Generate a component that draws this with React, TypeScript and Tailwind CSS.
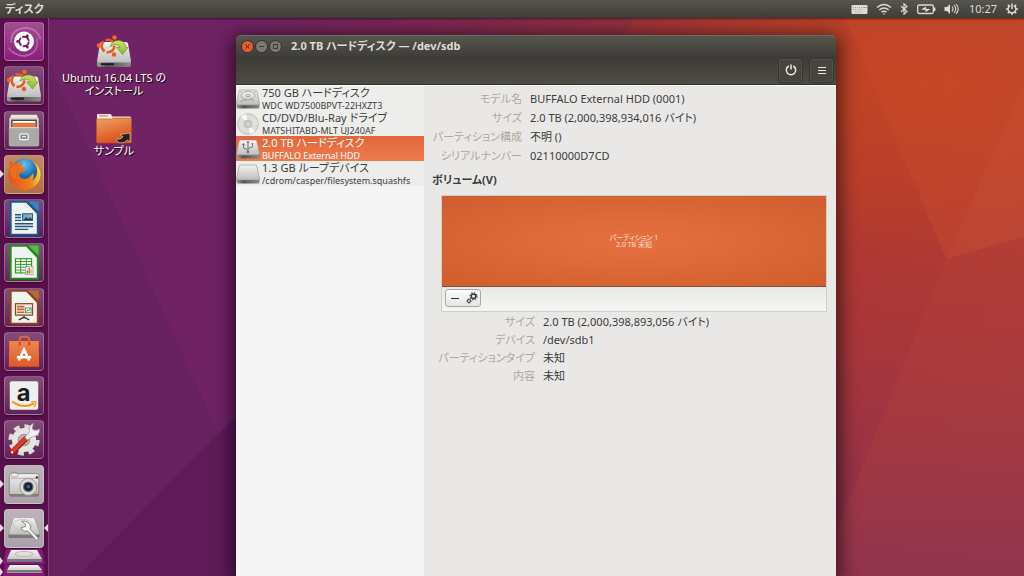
import React, { useState } from "react";

const panelFont =
  "font-['Noto_Sans','Noto_Sans_CJK_JP',sans-serif] [font-feature-settings:'palt']";

const Wallpaper = () => (
  <svg
    className="absolute inset-0 h-full w-full"
    viewBox="0 0 1024 576"
    preserveAspectRatio="none"
    aria-hidden="true"
  >
    <defs>
      <linearGradient id="wallBase" x1="0" y1="0" x2="1" y2="0">
        <stop offset="0" stopColor="#6f2366" />
        <stop offset="0.22" stopColor="#6f2264" />
        <stop offset="0.45" stopColor="#7d284f" />
        <stop offset="0.66" stopColor="#98313b" />
        <stop offset="0.84" stopColor="#b3392e" />
        <stop offset="1" stopColor="#b43c30" />
      </linearGradient>
      <linearGradient id="wallFade" x1="0" y1="0" x2="0" y2="1">
        <stop offset="0.3" stopColor="#a0334a" stopOpacity="0" />
        <stop offset="1" stopColor="#7a2c5c" stopOpacity="0.8" />
      </linearGradient>
      <radialGradient id="wallGlow" cx="0.9" cy="0.15" r="0.3">
        <stop offset="0" stopColor="#c94a20" stopOpacity="0.7" />
        <stop offset="1" stopColor="#c94a20" stopOpacity="0" />
      </radialGradient>
    </defs>
    <rect width="1024" height="576" fill="url(#wallBase)" />
    <path d="M49 62 L219 434 L78 576 H0 V0 H20 Z" fill="#67215f" />
    <path d="M236 416 L78 576 H500 V416 Z" fill="#5f1a58" />
    <path d="M633 18 L560 200 H845 V18 Z" fill="#b23c30" opacity="0.25" />
    <rect x="600" width="424" height="576" fill="url(#wallFade)" />
    <path d="M845 18 L946 259 L1024 83 V18 Z" fill="#c74c32" opacity="0.4" />
    <rect width="1024" height="576" fill="url(#wallGlow)" />
    <path d="M1024 83 L946 259 L1024 237 Z" fill="#d2583a" opacity="0.35" />
    <path d="M946 259 L1024 237 V576 H818 Z" fill="#c04a3e" opacity="0.2" />
  </svg>
);

/* Shared gradients for all the drive and device icons */
const IconDefs = () => (
  <svg className="absolute h-0 w-0" aria-hidden="true">
    <defs>
      <linearGradient id="metal" x1="0" y1="0" x2="0" y2="1">
        <stop offset="0" stopColor="#f3f3f2" />
        <stop offset="1" stopColor="#bdbdba" />
      </linearGradient>
      <linearGradient id="metalEdge" x1="0" y1="0" x2="1" y2="0">
        <stop offset="0" stopColor="#9c9c9a" />
        <stop offset="0.3" stopColor="#555" />
        <stop offset="1" stopColor="#8a8a88" />
      </linearGradient>
      <linearGradient id="folder" x1="0" y1="0" x2="0.4" y2="1">
        <stop offset="0" stopColor="#f2a35e" />
        <stop offset="1" stopColor="#d9511f" />
      </linearGradient>
      <linearGradient id="bag" x1="0" y1="0" x2="0" y2="1">
        <stop offset="0" stopColor="#f08552" />
        <stop offset="1" stopColor="#df5a22" />
      </linearGradient>
      <radialGradient id="globe" cx="0.5" cy="0.2" r="0.8">
        <stop offset="0" stopColor="#6fc4ee" />
        <stop offset="0.5" stopColor="#1f6fb8" />
        <stop offset="1" stopColor="#123a7c" />
      </radialGradient>
      <linearGradient id="fox" x1="0" y1="0.5" x2="1" y2="0.3">
        <stop offset="0" stopColor="#e5541a" />
        <stop offset="0.6" stopColor="#f07f1b" />
        <stop offset="1" stopColor="#ffdf3a" />
      </linearGradient>
      <linearGradient id="arrow" x1="0" y1="0" x2="0" y2="1">
        <stop offset="0" stopColor="#cfe06a" />
        <stop offset="1" stopColor="#86b52c" />
      </linearGradient>
    </defs>
  </svg>
);

interface DriveProps {
  className?: string;
  kind?: "plain" | "hdd" | "usb";
}

const DriveIcon: React.FC<DriveProps> = ({ className, kind = "plain" }) => (
  <svg className={className} viewBox="0 0 24 20" aria-hidden="true">
    <path d="M0.500 15 h23 v3 q0 1.500 -1.500 1.500 h-20 q-1.500 0 -1.500 -1.500z" fill="url(#metalEdge)" />
    <path d="M4.500 1 h15 q1 0 1.300 1 l2.700 12.500 q0 1.500 -1.400 1.500 h-20.200 q-1.400 0 -1.400 -1.500 l2.700 -12.500 q.3 -1 1.300 -1z" fill="url(#metal)" stroke="#8d8d8b" strokeWidth="0.6" />
    {kind === "hdd" && (
      <g fill="none" stroke="#9a9a98" strokeWidth="0.8">
        <ellipse cx="12" cy="6.5" rx="7" ry="4.3" />
        <ellipse cx="12" cy="6.5" rx="2.2" ry="1.2" />
        <path d="M4 13 q3 -3 7 -1.5 M18 12.5 l-4 -3" />
        <circle cx="5" cy="3" r="0.4" />
        <circle cx="19" cy="3" r="0.4" />
      </g>
    )}
    {kind === "usb" && (
      <g fill="none" stroke="#777" strokeWidth="1">
        <path d="M12 2.5 V13 M12 11 L7.5 9 V6 M12 9.5 L16.5 8 V5" />
        <circle cx="12" cy="13" r="1" fill="#777" />
        <circle cx="7.5" cy="5.5" r="0.8" fill="#777" />
        <path d="M15.8 4.5 h1.4 M10.8 4 l1.2 -1.7 1.2 1.7" />
      </g>
    )}
  </svg>
);

const DiscIcon = () => (
  <svg className="h-[22px] w-6 shrink-0" viewBox="0 0 24 22" aria-hidden="true">
    <circle cx="12" cy="11" r="10.3" fill="#dededc" stroke="#a9a9a7" strokeWidth="0.7" />
    <path d="M12 11 L5 3.5 A10 10 0 0 1 10 1.2 Z" fill="#f8f8f8" />
    <path d="M12 11 L19 18.5 A10 10 0 0 1 14 20.8 Z" fill="#f8f8f8" />
    <path d="M12 11 L21 7 A10 10 0 0 1 22 12 Z" fill="#e9e4c6" />
    <circle cx="12" cy="11" r="4" fill="#cfcfcd" stroke="#aaa" strokeWidth="0.6" />
    <circle cx="12" cy="11" r="1.6" fill="#f6f6f6" stroke="#999" strokeWidth="0.6" />
  </svg>
);

const InstallIcon = ({ className }: { className: string }) => (
  <svg className={className} viewBox="0 0 36 34" aria-hidden="true">
    <path d="M1 27 h34 v4 q0 2 -2 2 h-30 q-2 0 -2 -2z" fill="url(#metalEdge)" />
    <rect x="5" y="29.2" width="13" height="2" fill="#1f1f1f" />
    <path d="M6 8 h24 q1.5 0 2 1.5 l3 17.5 q0 1.5 -1.5 1.5 h-31 q-1.5 0 -1.5 -1.5 l3 -17.5 q.5 -1.5 2 -1.5z" fill="url(#metal)" />
    <ellipse cx="18" cy="19" rx="12" ry="7" fill="none" stroke="#cfcfcd" />
    <g transform="translate(12 12)">
      <circle r="6.3" fill="none" stroke="#ec5a1c" strokeWidth="2.6" strokeDasharray="11.2 2" />
      <circle cx="-9" cy="-0.500" r="2.200" fill="#f26a22" />
      <circle cx="6.500" cy="-8.500" r="2.200" fill="#f26a22" />
      <circle cx="6" cy="8.500" r="2.200" fill="#ec5a1c" />
    </g>
    <path d="M14 12.500 q2 -6.500 9 -6 q6.500 .5 7 7 h2 l-5.500 7 -6 -7 h3.500 q-1 -3 -4 -3 q-3.500 0 -6 2z" fill="url(#arrow)" stroke="#709a26" strokeWidth="0.7" />
  </svg>
);

const FolderIcon = () => (
  <svg className="h-[31px] w-9" viewBox="0 0 36 31" aria-hidden="true">
    <path d="M1 6 V2 q0 -1 1 -1 h12 q1 0 1.500 1 l.5 1.500 h18 q1 0 1 1 V8 H1z" fill="#efe9e4" />
    <path d="M3 2.800 h9" stroke="#e58a55" strokeWidth="1.300" />
    <path d="M0.500 6 h15 l2 -1 h18 v24 q0 1 -1 1 h-33 q-1 0 -1 -1z" fill="url(#folder)" stroke="#c2501f" strokeWidth="0.600" />
    <path d="M21 25.500 q2.500 2 6 -1.500 l-2.500 -2.500 9.500 -1.500 v9 l-2.500 -2 q-5 5 -10.500 1.500z" fill="#222" stroke="#e9d7c8" strokeWidth="0.600" />
  </svg>
);

const DashLogo = () => (
  <svg className="h-full w-full" viewBox="0 0 39 39" aria-hidden="true">
    <g fill="none" stroke="#d99ad0" opacity="0.5">
      <path d="M6 21 Q5 6 22 5 Q34 6 37 17" strokeWidth="2" />
      <path d="M33 16 Q36 32 20 35 Q8 34 3 26" strokeWidth="1.500" />
      <path d="M8 30 Q16 38 29 31" />
    </g>
    <circle cx="19.500" cy="19.500" r="10.500" fill="#fff" />
    <circle cx="19.500" cy="19.500" r="5" fill="none" stroke="#6b1d5c" strokeWidth="2" strokeDasharray="9 1.500" />
    <circle cx="12.800" cy="19.500" r="1.500" fill="#6b1d5c" />
    <circle cx="23" cy="13.600" r="1.500" fill="#6b1d5c" />
    <circle cx="23" cy="25.400" r="1.500" fill="#6b1d5c" />
  </svg>
);

const FilesIcon = () => (
  <svg className="h-full w-full" viewBox="0 0 39 39" aria-hidden="true">
    <path d="M6 3 h27 l2 5 H4z" fill="#e6e6e4" />
    <rect x="4" y="6" width="31" height="30" rx="2" fill="#d0d0ce" />
    <rect x="6" y="8" width="27" height="9" fill="#4b4540" />
    <rect x="7.500" y="9.500" width="24" height="2" fill="#fff" />
    <rect x="7" y="11.500" width="25" height="5" fill="#e8743a" />
    <rect x="3.500" y="16" width="32" height="20" rx="1.500" fill="#a9a9a7" />
    <rect x="4" y="16" width="31" height="1" fill="#e0e0de" />
    <rect x="15" y="23" width="9" height="6" rx="1" fill="#8b8b89" stroke="#f5f5f5" strokeWidth="1.300" />
    <path d="M17.500 26 h4" stroke="#f5f5f5" strokeWidth="1.200" />
  </svg>
);

const FirefoxIcon = () => (
  <svg className="h-full w-full" viewBox="0 0 39 39" aria-hidden="true">
    <circle cx="20" cy="18" r="15" fill="url(#globe)" />
    <path d="M5 10 Q3 6 5 5 Q8 8 11 8 Q15 5 18 8 L16 11 Q22 13 20 16 Q15 17 14 20 Q16 25 22 24 Q27 22 29 18 Q31 23 27 27 Q35 22 33 13 Q31 7 27 5 Q36 9 37 19 Q36 34 20 36 Q4 34 3 20 Q3 14 5 10z" fill="url(#fox)" />
    <path d="M5 12 Q10 9 13 12 Q9 18 13 25 Q7 24 5 19z" fill="#e8701f" />
    <path d="M20 7 q4 -2 7 1 q-2 4 -5 2z" fill="#4fa3dc" opacity="0.700" />
  </svg>
);

const DocumentIcon = ({ kind }: { kind: "writer" | "calc" | "impress" }) => {
  const color = { writer: "#185a8c", calc: "#189515", impress: "#8d4519" }[kind];
  const fold = { writer: "#3287bd", calc: "#4cc33b", impress: "#ba6a35" }[kind];

  return (
    <svg className="h-full w-full" viewBox="0 0 39 39" aria-hidden="true">
      <path d="M5.500 2 h17 l11.500 12 v22.500 H5.500z" fill="#f2f2f1" stroke={color} strokeWidth="2" />
      <path d="M24 1.500 h11 v11z" fill={fold} />
      <path d="M22.500 2 l12 12" stroke={color} strokeWidth="2" />
      {kind === "writer" && (
        <g stroke="#1b5685" strokeWidth="1.500">
          <path d="M10 15.500 h6.500 M10 18.500 h6.500 M10 21.500 h6.500 M10 25 h19 M10 28 h19 M10 31 h14" />
          <rect x="18" y="14.500" width="10.500" height="7" fill="#75a9d0" strokeWidth="1" />
          <path d="M19 21 l3 -3 2 2 2 -1.500 2.500 2.500z" fill="#333" stroke="none" />
          <circle cx="26.500" cy="16.500" r="1" fill="#f4bb2e" stroke="none" />
        </g>
      )}
      {kind === "calc" && (
        <g>
          <rect x="10.500" y="15.500" width="17" height="15" fill="#fff" stroke="#259b20" strokeWidth="1.200" />
          <path d="M10.500 18.500 h17 M10.500 21.500 h17 M10.500 24.500 h17 M10.500 27.500 h17 M16 15 v16 M22 15 v16" stroke="#259b20" />
          <rect x="21" y="24" width="8" height="8" fill="#f7f7f7" stroke="#9a9a9a" strokeWidth="0.800" />
          <path d="M23 31 v-3" stroke="#3577c2" strokeWidth="1.500" />
          <path d="M25 31 v-6" stroke="#e2602a" strokeWidth="1.500" />
          <path d="M27 31 v-4" stroke="#e8b331" strokeWidth="1.500" />
        </g>
      )}
      {kind === "impress" && (
        <g stroke="#8d4519">
          <rect x="10.500" y="15.500" width="18" height="12" fill="#f7eee6" strokeWidth="1.300" />
          <path d="M12 18.500 h8 M12 21.500 h8 M12 24.500 h8" stroke="#c4622a" strokeWidth="1.800" />
          <rect x="21" y="20" width="6" height="5" fill="#fff" stroke="#3c8f3c" strokeWidth="0.800" />
          <path d="M21.500 24 l2 -2 1 1 2 -3" stroke="#3c8f3c" fill="none" />
          <path d="M19.500 28 v3 M14 32.500 l5 -2.500 h1 l5 2.500" stroke="#333" strokeWidth="1.300" fill="none" />
        </g>
      )}
    </svg>
  );
};

const SoftwareIcon = () => (
  <svg className="h-full w-full" viewBox="0 0 39 39" aria-hidden="true">
    <path d="M15 13 V7 q0 -3 3 -3 h4 q3 0 3 3 v6" fill="none" stroke="#dd673a" strokeWidth="2.200" />
    <path d="M4 8.500 h31 l.5 27 h-32z" fill="url(#bag)" />
    <path d="M15 9 v4 M25 9 v4" stroke="#c24918" strokeWidth="2" />
    <path d="M14 29 L19.500 17.500 L25 29" fill="none" stroke="#fff" strokeWidth="2.800" />
    <path d="M13 25.500 h13" stroke="#fff" strokeWidth="2.500" strokeLinecap="round" />
  </svg>
);

const AmazonIcon = () => (
  <svg className="h-full w-full" viewBox="0 0 39 39" aria-hidden="true">
    <rect x="4.500" y="4.500" width="30" height="30" rx="2" fill="#efefee" />
    <text x="19" y="25" textAnchor="middle" fontSize="25" fontWeight="bold" fontFamily="Inter, sans-serif" fill="#1c1c1c">
      a
    </text>
    <path d="M7 26 Q19 34 30 28" fill="none" stroke="#f39a1d" strokeWidth="2.300" />
    <path d="M27 26.500 q4 -1 5 0 q0 3 -2 5" fill="none" stroke="#f39a1d" strokeWidth="1.500" />
  </svg>
);

const SettingsIcon = () => (
  <svg className="h-full w-full" viewBox="0 0 39 39" aria-hidden="true">
    <circle cx="19.500" cy="20" r="14" fill="none" stroke="#dcdcda" strokeWidth="5" strokeDasharray="6 5" />
    <circle cx="19.500" cy="20" r="9.500" fill="none" stroke="#e4e4e2" strokeWidth="6.500" />
    <circle cx="19.500" cy="20" r="6" fill="#b9b3b7" stroke="#9a969a" strokeWidth="0.700" />
    <path d="M7 33 L21 19" stroke="#9e1712" strokeWidth="6" strokeLinecap="round" />
    <path d="M7 32.500 L21 18.500" stroke="#dc3b2c" strokeWidth="4.500" strokeLinecap="round" />
    <path d="M20.500 17 L25.500 11 q-2 -6 4 -8.500 l-1.500 5.500 3 2.500 5 -2 q0 7 -6.500 7.500 L23 20z" fill="#f1f1ef" stroke="#9b9b99" strokeWidth="0.700" />
    <circle cx="7" cy="33" r="1.200" fill="#fff" />
  </svg>
);

const CameraIcon = () => (
  <svg className="h-full w-full" viewBox="0 0 39 39" aria-hidden="true">
    <path d="M5 8 q5 -3 9 0 h18 q3 0 3 2 v20 q0 2 -2 2 H6 q-2 0 -2 -2 V10 q0 -1 1 -2z" fill="url(#metal)" stroke="#777" strokeWidth="0.800" />
    <path d="M5 13 h29" stroke="#b0b0ae" />
    <path d="M4.500 30.500 h30" stroke="#666" strokeWidth="1.500" />
    <ellipse cx="9.500" cy="9.500" rx="4" ry="2.200" fill="#eee" stroke="#888" strokeWidth="0.700" />
    <circle cx="24" cy="22" r="9" fill="#d7d7d5" stroke="#888" strokeWidth="0.800" />
    <circle cx="24" cy="22" r="6.300" fill="#777" stroke="#eee" />
    <circle cx="24" cy="22" r="4.300" fill="#151a25" />
    <rect x="22" y="20" width="4" height="3.500" fill="#2c5f9e" />
    <circle cx="33" cy="12" r="1.200" fill="#222" />
    <rect x="31.500" y="27" width="2.500" height="2.500" fill="#f39b25" />
  </svg>
);

const DiskToolIcon = () => (
  <svg className="h-full w-full" viewBox="0 0 39 39" aria-hidden="true">
    <path d="M3 24 h33 v4 q0 1.500 -1.500 1.500 h-30 q-1.500 0 -1.500 -1.500z" fill="#777775" />
    <path d="M9 8 h20 q1.500 0 2 1.500 l5 15 q0 1.500 -1.500 1.500 h-30 q-1.500 0 -1.500 -1.500 l5 -15 q.5 -1.500 1 -1.500z" fill="url(#metal)" stroke="#999" strokeWidth="0.700" />
    <ellipse cx="18" cy="15.500" rx="10" ry="5.500" fill="none" stroke="#c4c4c2" />
    <path d="M17 12 l4 3 v2.500 l-4.500 1 q-1 3 4 4 l3 -.5 9 10 q2.500 0 2 -2.500 l-8.500 -9 q1.500 -5.500 -3.500 -8 q-3 -1.500 -5.500 -.5z" fill="#f7f7f6" stroke="#777" strokeWidth="0.900" />
  </svg>
);

interface LauncherItem {
  name: string;
  icon: React.ReactNode;
  bg: string;
  running?: boolean;
  focused?: boolean;
}

const DARK = "bg-[#622258]";
const GREY = "bg-[#aba1aa]";

const launcherItems: LauncherItem[] = [
  { name: "Dash", icon: <DashLogo />, bg: "bg-[#8c1f7a]" },
  { name: "インストール", icon: <InstallIcon className="h-full w-full p-px" />, bg: DARK },
  { name: "ファイル", icon: <FilesIcon />, bg: DARK },
  { name: "Firefox", icon: <FirefoxIcon />, bg: "bg-[#b16f43]", running: true },
  { name: "Writer", icon: <DocumentIcon kind="writer" />, bg: "bg-[#562062]" },
  { name: "Calc", icon: <DocumentIcon kind="calc" />, bg: "bg-[#5d2a55]" },
  { name: "Impress", icon: <DocumentIcon kind="impress" />, bg: "bg-[#68254f]" },
  { name: "ソフトウェア", icon: <SoftwareIcon />, bg: "bg-[#661f55]" },
  { name: "Amazon", icon: <AmazonIcon />, bg: DARK },
  { name: "システム設定", icon: <SettingsIcon />, bg: DARK },
  { name: "スクリーンショット", icon: <CameraIcon />, bg: GREY, running: true },
  { name: "ディスク", icon: <DiskToolIcon />, bg: GREY, running: true, focused: true },
];

const Launcher = () => (
  <nav className="relative flex w-[49px] shrink-0 flex-col border-r border-[#84447a] bg-[#5a0f4d] pt-1">
    <div className="flex min-h-0 flex-1 flex-col justify-between">
      {launcherItems.map((item) => (
        <div key={item.name} className="flex items-center">
          <span
            className={`h-0 w-0 border-y-4 border-l-4 border-y-transparent ${
              item.running ? "border-l-[#e6dbe4]" : "border-l-transparent"
            }`}
          />
          <button
            aria-label={item.name}
            className={`h-[39px] w-10 rounded-[4px] border border-white/25 bg-gradient-to-b from-white/20 to-transparent shadow-[0_1px_2px_rgba(0,0,0,0.4)] ${item.bg}`}
          >
            {item.icon}
          </button>
          {item.focused && (
            <span className="h-0 w-0 border-y-4 border-r-4 border-y-transparent border-r-[#e6dbe4]" />
          )}
        </div>
      ))}
    </div>
    {/* collapsed tail of the launcher */}
    <svg className="h-7 w-12" viewBox="0 0 48 28" aria-hidden="true">
      <path d="M6 1 h36 l3 15 h-42z" fill="#87197a" />
      <path d="M5 17 h38 l2 11 h-42z" fill="#87197a" />
      <path d="M11 2 h26 l5 9 v3 h-35 v-3z" fill="url(#metal)" />
      <path d="M7 11 h35 v3 h-35z" fill="#777775" />
      <ellipse cx="24" cy="6" rx="9" ry="2.500" fill="none" stroke="#b7b7b5" />
      <path d="M10 17 h28 l4 5 v3 h-35 v-3z" fill="url(#metal)" />
      <path d="M7 22 h35 v2.500 h-35z" fill="#777775" />
      <path d="M0 9 l3 4 -3 4z M0 20 l3 4 -3 4z" fill="#e6dbe4" />
    </svg>
  </nav>
);

const TopPanel = () => (
  <header className="relative flex h-[18px] shrink-0 items-center justify-between bg-gradient-to-b from-[#565550] to-[#3e3d38] pr-[6px] pl-[5px] text-[#dfdbd2] shadow-[0_1px_2px_rgba(0,0,0,0.5)]">
    <span className="text-[11px] leading-4 font-bold">ディスク</span>
    <div className="flex items-center">
      <svg className="h-[11px] w-[17px]" viewBox="0 0 17 11" aria-hidden="true">
        <rect x="0.500" y="1" width="16" height="9" rx="1" fill="#dfdbd2" />
        <path d="M2 3.500 h9 M2 5.500 h9" stroke="#aaa" strokeDasharray="1 1" />
        <path d="M3 8 h8" stroke="#bbb" />
        <path d="M12.500 3.500 h3" stroke="#666" strokeDasharray="1 1" />
      </svg>
      <svg className="ml-2 h-3 w-4" viewBox="0 0 16 12" fill="none" stroke="#dfdbd2" strokeWidth="1.400" aria-hidden="true">
        <path d="M1 4.500 Q8 -1.500 15 4.500 M3.300 7 Q8 3 12.700 7 M5.500 9.300 Q8 7 10.500 9.300" />
        <circle cx="8" cy="11" r="0.800" fill="#dfdbd2" stroke="none" />
      </svg>
      <svg className="ml-2 h-3 w-2" viewBox="0 0 8 12" fill="none" stroke="#dfdbd2" strokeWidth="1.200" aria-hidden="true">
        <path d="M1 3.300 L7 8.500 L4 11.200 V0.800 L7 3.500 L1 8.700" />
      </svg>
      <svg className="ml-[9px] h-3 w-[19px]" viewBox="0 0 19 12" aria-hidden="true">
        <rect x="0.700" y="2" width="15.600" height="8.500" rx="1.500" fill="none" stroke="#dfdbd2" strokeWidth="1.300" />
        <path d="M17.700 4.500 v3.500" stroke="#dfdbd2" strokeWidth="1.400" />
        <path d="M4 6.500 l5 -3 v2.200 l4.500 .3 -5 3.300 v-2.300z" fill="#dfdbd2" />
      </svg>
      <svg className="ml-2 h-3 w-[15px]" viewBox="0 0 15 12" aria-hidden="true">
        <path d="M0.500 4 h2.500 l3 -3 v10 l-3 -3 h-2.500z" fill="#dfdbd2" />
        <path d="M8 3.500 q2 2.500 0 5 M10 2 q3.500 4 0 8 M12 1 q4.500 5 0 10" fill="none" stroke="#dfdbd2" strokeWidth="1.100" />
      </svg>
      <time className="ml-[10px] text-[11px] leading-4">10:27</time>
      <svg className="ml-[9px] h-3 w-3" viewBox="0 0 12 12" fill="none" stroke="#dfdbd2" aria-hidden="true">
        <path d="M4.200 2.600 A3.900 3.900 0 1 0 7.800 2.600" strokeWidth="1.500" />
        <path d="M6 0.500 V6" strokeWidth="1.500" />
        <path d="M0 6 h2 M10 6 h2 M6 10 v2 M1.800 10.200 l1.300 -1.300 M10.200 10.200 l-1.300 -1.300 M1.800 1.800 l1.300 1.300 M10.200 1.800 l-1.300 1.300" strokeWidth="1.500" />
      </svg>
    </div>
  </header>
);

interface Device {
  title: string;
  model: string;
  icon: React.ReactNode;
}

const driveClass = "h-5 w-6 shrink-0";

const devices: Device[] = [
  { title: "750 GB ハードディスク", model: "WDC WD7500BPVT-22HXZT3", icon: <DriveIcon className={driveClass} kind="hdd" /> },
  { title: "CD/DVD/Blu-Ray ドライブ", model: "MATSHITABD-MLT UJ240AF", icon: <DiscIcon /> },
  { title: "2.0 TB ハードディスク", model: "BUFFALO External HDD", icon: <DriveIcon className={driveClass} kind="usb" /> },
  { title: "1.3 GB ループデバイス", model: "/cdrom/casper/filesystem.squashfs", icon: <DriveIcon className={driveClass} /> },
];

const driveInfo = [
  ["モデル名", "BUFFALO External HDD (0001)"],
  ["サイズ", "2.0 TB (2,000,398,934,016 バイト)"],
  ["パーティション構成", "不明 ()"],
  ["シリアルナンバー", "02110000D7CD"],
];

const volumeInfo = [
  ["サイズ", "2.0 TB (2,000,398,893,056 バイト)"],
  ["デバイス", "/dev/sdb1"],
  ["パーティションタイプ", "未知"],
  ["内容", "未知"],
];

const TitleBar = () => (
  <div className="flex h-[21px] items-center gap-[3px] rounded-t-[5px] border-t border-[#6b6a63] bg-gradient-to-b from-[#56554d] to-[#3f3e39] pl-[6px]">
    <button
      aria-label="閉じる"
      className="flex h-[11px] w-[11px] items-center justify-center rounded-full bg-[#ec5b2e] ring-1 ring-[#37352f]"
    >
      <svg className="h-[5px] w-[5px]" viewBox="0 0 5 5" stroke="#4d1f10" aria-hidden="true">
        <path d="M0.500 0.500 L4.500 4.500 M4.500 0.500 L0.500 4.500" />
      </svg>
    </button>
    <button
      aria-label="最小化"
      className="flex h-[11px] w-[11px] items-center justify-center rounded-full bg-[#7b7971] ring-1 ring-[#37352f]"
    >
      <span className="h-px w-[5px] bg-[#3c3b37]" />
    </button>
    <button
      aria-label="最大化"
      className="flex h-[11px] w-[11px] items-center justify-center rounded-full bg-[#7b7971] ring-1 ring-[#37352f]"
    >
      <span className="h-[5px] w-[5px] border border-[#3c3b37]" />
    </button>
    <h1 className="ml-[7px] text-[11px] leading-4 font-bold whitespace-nowrap text-[#dfdbd2]">
      2.0 TB ハードディスク — /dev/sdb
    </h1>
  </div>
);

const DiskWindow = () => {
  const [selected, setSelected] = useState(2);

  return (
    <main className="absolute top-[17px] right-[188px] bottom-0 left-[187px] flex flex-col rounded-t-[5px] shadow-[0_4px_18px_4px_rgba(0,0,0,0.6)]">
      <TitleBar />
      <div className="flex h-[29px] items-center justify-end gap-[6px] border-b border-[#33322d] bg-gradient-to-b from-[#3c3b37] to-[#4d4c44] pr-[2px]">
        <button
          aria-label="電源"
          className="flex h-[25px] w-[25px] items-center justify-center rounded-[3px] border border-[#36352f] bg-[#45443e] shadow-[inset_0_0_0_1px_#53524a]"
        >
          <svg className="h-3 w-3" viewBox="0 0 12 12" fill="none" stroke="#eeeae1" strokeWidth="1.500" aria-hidden="true">
            <path d="M3.700 2 A4.700 4.700 0 1 0 8.300 2 M6 0.500 V5.500" />
          </svg>
        </button>
        <button
          aria-label="メニュー"
          className="flex h-[25px] w-[25px] flex-col items-center justify-center gap-[2px] rounded-[3px] border border-[#36352f] bg-[#45443e] shadow-[inset_0_0_0_1px_#53524a]"
        >
          <span className="h-px w-2 bg-[#eeeae1]" />
          <span className="h-px w-2 bg-[#eeeae1]" />
          <span className="h-px w-2 bg-[#eeeae1]" />
        </button>
      </div>
      <div className="flex min-h-0 flex-1 border-t border-white bg-[#e9e8e7]">
        <ul className="w-[188px] shrink-0 bg-[#f5f5f5] text-[#3c3c3c]">
          {devices.map((device, index) => (
            <li key={device.title}>
              <button
                onClick={() => setSelected(index)}
                className={`flex w-full items-center gap-[2px] text-left whitespace-nowrap ${
                  selected === index
                    ? "bg-gradient-to-b from-[#e1673a] to-[#ee7b4d] text-white"
                    : "bg-[#ededec]"
                }`}
              >
                {device.icon}
                <span className="flex min-w-0 flex-col">
                  <span className="text-[11px] leading-[14px]">{device.title}</span>
                  <span className="text-[9px] leading-[11px]">{device.model}</span>
                </span>
              </button>
            </li>
          ))}
        </ul>
        <section className="min-w-0 flex-1 pt-[3px] pr-[9px] pl-2 text-[11px] whitespace-nowrap text-[#3c3c3c]">
          <dl className="grid grid-cols-[90px_1fr] gap-x-2 leading-[19px]">
            {driveInfo.map(([label, value]) => (
              <React.Fragment key={label}>
                <dt className="flex justify-end text-[#b0a798]">{label}</dt>
                <dd>{value}</dd>
              </React.Fragment>
            ))}
          </dl>
          <h2 className="mt-[5px] leading-5 font-bold">ボリューム(V)</h2>
          <div className="mt-[5px] ml-[9px] border border-[#cfcecb]">
            <button className="flex h-[91px] w-full flex-col items-center justify-center border-b border-[#8a5038] bg-[radial-gradient(ellipse_at_center,#e67140,#d05d2d)] text-[7px] leading-[7px] text-[#f7e0d5]">
              <span>パーティション 1</span>
              <span>2.0 TB 未知</span>
            </button>
            <div className="h-6 bg-gradient-to-b from-[#e9e8e7] to-[#f5f5f4] px-[3px] pt-[2px]">
              <div className="flex h-[18px] w-9 rounded-[3px] border border-[#a9a8a5] bg-gradient-to-b from-[#fbfbfb] to-[#e6e5e4]">
                <button aria-label="削除" className="flex flex-1 items-center justify-center">
                  <span className="h-px w-2 bg-[#333]" />
                </button>
                <button aria-label="その他の操作" className="flex flex-1 items-center justify-center">
                  <svg className="h-3 w-3" viewBox="0 0 12 12" fill="none" stroke="#3c3c3c" aria-hidden="true">
                    <circle cx="7.500" cy="4.300" r="2.300" strokeWidth="1.500" />
                    <circle cx="7.500" cy="4.300" r="3.500" strokeWidth="1.200" strokeDasharray="1.400 1.350" />
                    <circle cx="3" cy="9" r="1.500" />
                    <circle cx="3" cy="9" r="2.200" strokeWidth="0.800" strokeDasharray="0.900 0.830" />
                  </svg>
                </button>
              </div>
            </div>
          </div>
          <dl className="mt-px grid grid-cols-[103px_1fr] gap-x-2 leading-[18px]">
            {volumeInfo.map(([label, value]) => (
              <React.Fragment key={label}>
                <dt className="flex justify-end text-[#b0a798]">{label}</dt>
                <dd>{value}</dd>
              </React.Fragment>
            ))}
          </dl>
        </section>
      </div>
    </main>
  );
};

const desktopLabel =
  "flex flex-col items-center text-[11px] leading-[13px] text-white [text-shadow:1px_1px_1px_#000]";

const App = () => (
  <div
    className={`relative flex h-screen flex-col overflow-hidden bg-[#6b2364] ${panelFont}`}
    lang="ja"
  >
    <Wallpaper />
    <IconDefs />
    <div className="relative flex min-h-0 flex-1 flex-col">
      <TopPanel />
      <div className="flex min-h-0 flex-1">
        <Launcher />
        <div className="relative min-w-0 flex-1">
          <div className="absolute top-4 left-[9px] flex w-28 flex-col items-center gap-4">
            <button className="flex flex-col items-center gap-[3px]">
              <InstallIcon className="h-[34px] w-9" />
              <span className={desktopLabel}>
                <span>Ubuntu 16.04 LTS の</span>
                <span>インストール</span>
              </span>
            </button>
            <button className="flex flex-col items-center">
              <FolderIcon />
              <span className={desktopLabel}>サンプル</span>
            </button>
          </div>
          <DiskWindow />
        </div>
      </div>
    </div>
  </div>
);

export default App;
